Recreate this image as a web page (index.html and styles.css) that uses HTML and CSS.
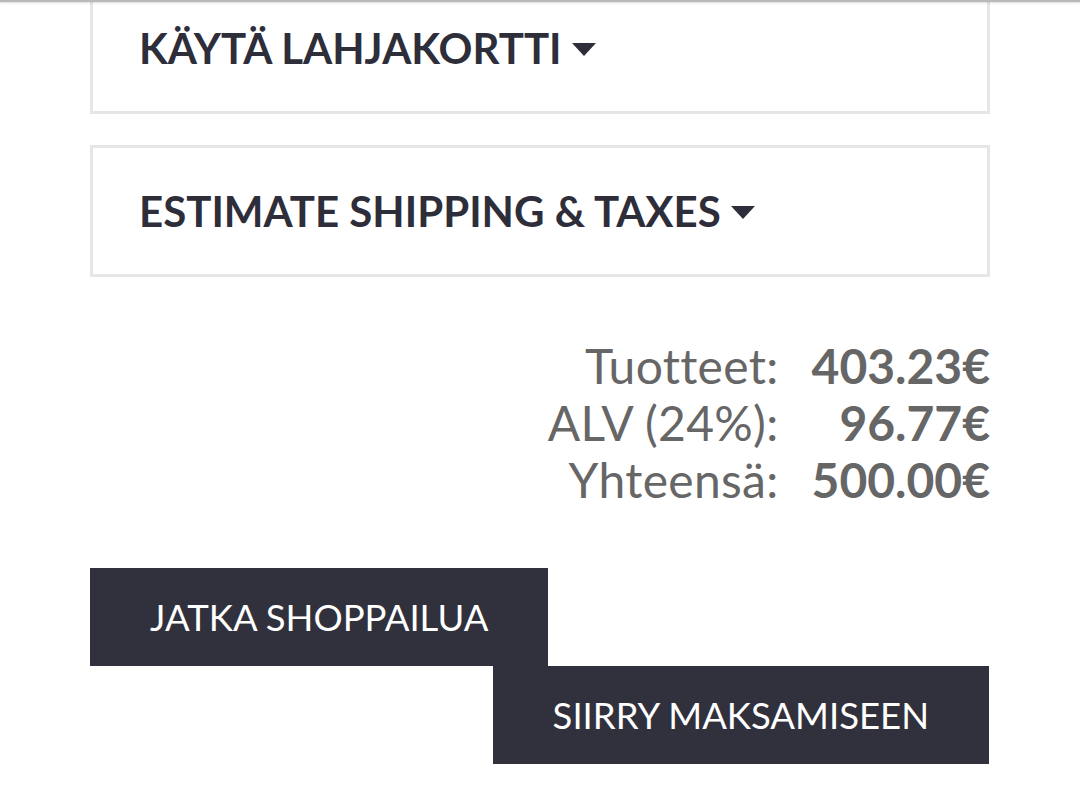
FILE: index.html
```html
<!DOCTYPE html>
<html>
<head>
    <title>Ostoskori</title>
    <link rel="stylesheet" href="styles.css">
</head>
<body>
    <div class="topbar"></div>

    <div class="cart">
        <div class="toggle-box">
            <span class="toggle-title">KÄYTÄ LAHJAKORTTI</span>
            <span class="caret"></span>
        </div>

        <div class="toggle-box">
            <span class="toggle-title">ESTIMATE SHIPPING &amp; TAXES</span>
            <span class="caret"></span>
        </div>

        <div class="totals">
            <span class="label">Tuotteet:</span>
            <span class="value">403.23€</span>
            <span class="label">ALV (24%):</span>
            <span class="value">96.77€</span>
            <span class="label">Yhteensä:</span>
            <span class="value">500.00€</span>
        </div>

        <div class="actions">
            <a href="#" class="btn btn-continue">JATKA SHOPPAILUA</a>
            <a href="#" class="btn btn-checkout">SIIRRY MAKSAMISEEN</a>
        </div>
    </div>
</body>
</html>
```

FILE: styles.css
```css
/* Cart summary, mobile layout */
body {
    margin: 0;
    font-family: Lato, "Open Sans", sans-serif;
    background: #fff;
    color: #2e2e3a;
}

.topbar {
    position: fixed;
    top: 0;
    left: 0;
    right: 0;
    height: 2px;
    background: #b9b9b9;
    box-shadow: 0 1px 2px rgba(0, 0, 0, 0.15);
    z-index: 10;
}

.cart {
    width: 900px;
    margin: -18px auto 0;
}

.toggle-box {
    box-sizing: border-box;
    height: 132px;
    border: 3px solid #e6e6e6;
    padding-left: 46px;
    display: flex;
    align-items: center;
    gap: 10px;
    margin-bottom: 31px;
}

.toggle-title {
    font-size: 42px;
    font-weight: 700;
    color: #2e2e3a;
}

.caret {
    width: 0;
    height: 0;
    border-left: 12px solid transparent;
    border-right: 12px solid transparent;
    border-top: 13px solid #2e2e3a;
    margin-top: 2px;
}

.totals {
    display: grid;
    grid-template-columns: auto auto;
    justify-content: end;
    column-gap: 33px;
    font-size: 48px;
    line-height: 57px;
    color: #666;
    text-align: right;
    margin-top: 60px;
}

.label {
    letter-spacing: 0.3px;
}

.value {
    font-weight: 700;
}

.actions {
    display: flex;
    flex-direction: column;
    margin-top: 60px;
}

.btn {
    display: block;
    height: 98px;
    line-height: 98px;
    padding: 0 60px;
    background: #31313d;
    color: #fff;
    font-size: 36.5px;
    text-decoration: none;
}

.btn-continue {
    align-self: flex-start;
}

.btn-checkout {
    align-self: flex-end;
    margin-right: 1px;
}
```
